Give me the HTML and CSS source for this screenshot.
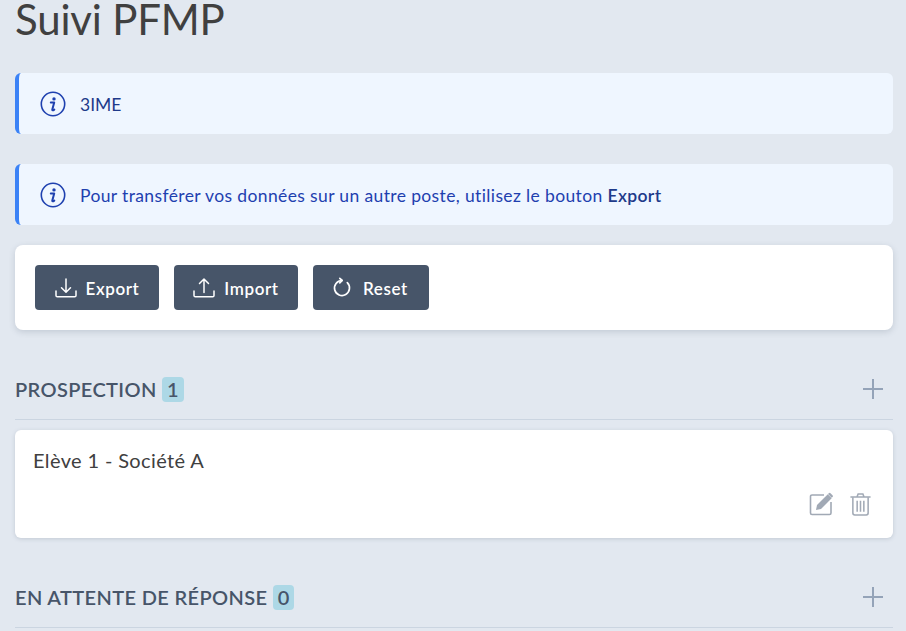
FILE: index.html
```html
<!DOCTYPE html>
<html lang="fr">
<head>
    <meta charset="UTF-8">
    <meta name="viewport" content="width=device-width, initial-scale=1.0">
    <title>Suivi PFMP</title>
    <link rel="stylesheet" href="styles.css">
</head>
<body>

<h1 class="page-title">Suivi PFMP</h1>

<div class="alert first">
    <svg class="alert-icon" viewBox="0 0 26 26" fill="none" stroke="currentColor">
        <circle cx="13" cy="13" r="11.7" stroke-width="1.6"/>
        <circle cx="14" cy="7.900" r="1.700" fill="currentColor" stroke="none"/>
        <path d="M10.800 11.600h3.400l-1.900 7c-.2.8.5 1 2 0" stroke-width="2" stroke-linecap="round" stroke-linejoin="round"/>
    </svg>
    <span>3IME</span>
</div>

<div class="alert second">
    <svg class="alert-icon" viewBox="0 0 26 26" fill="none" stroke="currentColor">
        <circle cx="13" cy="13" r="11.7" stroke-width="1.6"/>
        <circle cx="14" cy="7.900" r="1.700" fill="currentColor" stroke="none"/>
        <path d="M10.800 11.600h3.400l-1.900 7c-.2.8.5 1 2 0" stroke-width="2" stroke-linecap="round" stroke-linejoin="round"/>
    </svg>
    <span>Pour transférer vos données sur un autre poste, utilisez le bouton <b>Export</b></span>
</div>

<div class="actions">
    <button class="btn btn-export">
        <svg viewBox="0 0 22 22" fill="none" stroke="currentColor" stroke-width="1.5" stroke-linecap="round" stroke-linejoin="round">
            <path d="M1 14v4.500c0 .8.5 1.300 1.300 1.300h17.400c.8 0 1.300-.5 1.300-1.300V14"/>
            <path d="M11 2v13M6.500 10.800 11 15.300l4.500-4.500"/>
        </svg>
        <span>Export</span>
    </button>
    <button class="btn btn-import">
        <svg viewBox="0 0 22 22" fill="none" stroke="currentColor" stroke-width="1.5" stroke-linecap="round" stroke-linejoin="round">
            <path d="M1 14v4.500c0 .8.5 1.300 1.300 1.300h17.400c.8 0 1.300-.5 1.300-1.300V14"/>
            <path d="M11 15.500V2M6.500 6.500 11 2l4.500 4.500"/>
        </svg>
        <span>Import</span>
    </button>
    <button class="btn btn-reset">
        <svg viewBox="0 0 22 22" fill="none" stroke="currentColor" stroke-width="1.700" stroke-linecap="round" stroke-linejoin="round">
            <path d="M11 3.500A7.500 7.500 0 1 0 16.300 5.700"/>
            <path d="M8.800 1.300 11.200 3.500 8.800 5.800"/>
        </svg>
        <span>Reset</span>
    </button>
</div>

<section class="column">
    <div class="column-head">
        <h2>PROSPECTION <span class="count">1</span></h2>
        <svg class="add-icon" viewBox="0 0 22 22" fill="none" stroke="currentColor" stroke-width="2">
            <path d="M11 1v20M1 11h20"/>
        </svg>
    </div>
    <div class="item">
        <p>Elève 1 - Société A</p>
        <div class="item-tools">
            <svg class="tool-edit" viewBox="0 0 24 24" fill="none">
                <path d="M15 3H3a1.500 1.500 0 0 0-1.500 1.500V21A1.500 1.500 0 0 0 3 22.500h17.500A1.500 1.500 0 0 0 22 21V10" stroke="currentColor" stroke-width="1.600"/>
                <path d="M8 13 18.800 2.300l3.900 3.900L12 17l-5 1z" fill="currentColor"/>
                <path d="M19.800 1.300a1.200 1.200 0 0 1 1.700 0l2 2a1.200 1.200 0 0 1 0 1.700l-.8.700-3.700-3.700z" fill="currentColor"/>
            </svg>
            <svg class="tool-trash" viewBox="0 0 22 24" fill="none" stroke="currentColor" stroke-width="1.600">
                <path d="M1 4.600h20M7.500 4.200 8.500 1.500h5l1 2.700" stroke-linecap="round"/>
                <path d="M3 5v16.500a2 2 0 0 0 2 2h12a2 2 0 0 0 2-2V5"/>
                <path d="M7.500 8.500v11.500M11 8.500v11.500M14.500 8.500v11.500"/>
            </svg>
        </div>
    </div>
</section>

<section class="column">
    <div class="column-head">
        <h2>EN ATTENTE DE RÉPONSE <span class="count">0</span></h2>
        <svg class="add-icon" viewBox="0 0 22 22" fill="none" stroke="currentColor" stroke-width="2">
            <path d="M11 1v20M1 11h20"/>
        </svg>
    </div>
</section>

</body>
</html>
```

FILE: styles.css
```css
html, body {
    height: 631px;
    overflow: hidden;
}
body {
    font-family: Lato, "Noto Sans", sans-serif;
    background-color: #e2e8f0;
    color: #3f3f46;
    margin: 0;
    padding: 0 13px 0 15px;
    font-size: 16px;
}
.page-title {
    margin: 0;
    font-size: 42px;
    line-height: 38px;
    font-weight: 400;
    color: #404040;
    letter-spacing: -0.2px;
}
.alert {
    display: flex;
    align-items: center;
    gap: 14px;
    height: 61px;
    box-sizing: border-box;
    padding-left: 21px;
    background: #eff6ff;
    border-left: 4px solid #3b82f6;
    border-radius: 6px;
    color: #1e40af;
    font-size: 17.500px;
    letter-spacing: 0.37px;
}
.alert span {
    padding-top: 2px;
}
.alert.first {
    margin-top: 35px;
    color: #1e3a8a;
    letter-spacing: 0;
}
.alert.second {
    margin-top: 30px;
}
.alert b {
    font-weight: 600;
    color: #1e3a8a;
}
.alert-icon {
    width: 26px;
    height: 26px;
    color: #1e40af;
    flex-shrink: 0;
}
.actions {
    display: flex;
    gap: 15px;
    margin-top: 20px;
    padding: 20px;
    background: #fff;
    border-radius: 8px;
    box-shadow: 0 2px 6px rgba(71, 85, 105, 0.2);
}
.btn {
    display: flex;
    align-items: center;
    justify-content: center;
    gap: 9px;
    height: 45px;
    padding: 0;
    border: none;
    border-radius: 4px;
    background: #475569;
    color: #fff;
    font-family: inherit;
    font-size: 17px;
    font-weight: 600;
    letter-spacing: 0.6px;
}
.btn span {
    padding-top: 2px;
}
.btn svg {
    width: 22px;
    height: 22px;
}
.btn-export, .btn-import {
    width: 124px;
}
.btn-reset {
    width: 116px;
    justify-content: flex-start;
    gap: 10px;
    padding-left: 18px;
}
.column-head {
    display: flex;
    align-items: center;
    justify-content: space-between;
    height: 60px;
    padding-top: 29px;
    border-bottom: 1px solid #cbd5e1;
}
.column-head h2 {
    margin: 0;
    font-size: 20px;
    font-weight: 600;
    color: #475569;
    letter-spacing: 0.37px;
}
.count {
    display: inline-block;
    padding: 0 5px;
    border-radius: 4px;
    background: #add8e6;
    line-height: 25px;
    letter-spacing: 0;
}
.add-icon {
    width: 22px;
    height: 22px;
    color: #94a3b8;
    margin-right: 9px;
}
.item {
    margin-top: 10px;
    height: 108px;
    box-sizing: border-box;
    padding: 17px 18px 19px;
    background: #fff;
    border-radius: 6px;
    box-shadow: 0 1px 4px rgba(71, 85, 105, 0.2);
    display: flex;
    flex-direction: column;
    justify-content: space-between;
}
.item p {
    margin: 0;
    font-size: 20px;
    line-height: 26px;
    color: #404040;
    letter-spacing: 0.37px;
}
.item-tools {
    display: flex;
    justify-content: flex-end;
    align-items: center;
    gap: 17px;
    color: #a1a9b5;
    padding-right: 4px;
    margin-bottom: 3px;
}
.tool-edit {
    width: 24px;
    height: 24px;
}
.tool-trash {
    width: 21px;
    height: 24px;
}
```
